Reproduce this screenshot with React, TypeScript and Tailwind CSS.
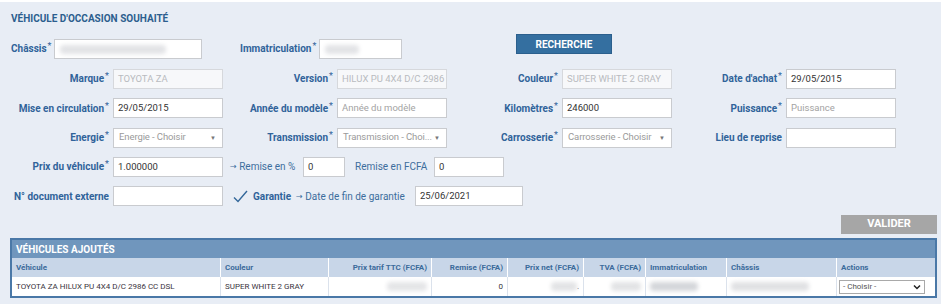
import React from 'react';

const Req = () => <span className="text-[9px] font-normal ml-[1px] relative top-[-3px]">*</span>;

const Arrow = () => <span className="font-['DejaVu_Sans',sans-serif] text-[8px] relative top-[-1px]">→</span>;

const Blur = ({ w, className = '' }: { w: string; className?: string }) => (
  <div className={`h-[9px] ${w} bg-[#d4d6da] rounded-sm blur-[2px] ${className}`} />
);

type Field = { label: string; req?: boolean; value?: string; placeholder?: string; kind?: 'input' | 'disabled' | 'select' };

const Input = ({ f, w }: { f: Field; w: string }) => {
  if (f.kind === 'select') {
    return (
      <div className={`${w} h-[20px] border border-[#c9cbcf] bg-white flex items-center justify-between pl-[5px] pr-[6px] text-[9.5px] text-[#9a9a9a]`}>
        <span className="whitespace-nowrap tracking-[-0.1px]">{f.placeholder}</span>
        <span className="text-[6px] text-[#777] ml-[2px]">▼</span>
      </div>
    );
  }
  const disabled = f.kind === 'disabled';
  return (
    <div
      className={`${w} h-[20px] border ${disabled ? 'border-[#d6d8dc] bg-[#f7f8fa] text-[#b9bbbf]' : 'border-[#c9cbcf] bg-white text-[#333]'} flex items-center px-[4px] text-[9.5px] overflow-hidden whitespace-nowrap`}
    >
      {f.value ? f.value : <span className="text-[#a3a3a3]">{f.placeholder}</span>}
    </div>
  );
};

const labelW = ['w-[102px]', 'w-[114px]', 'w-[115px]', 'w-[114px]'];

const rows: Field[][] = [
  [
    { label: 'Marque', req: true, value: 'TOYOTA ZA', kind: 'disabled' },
    { label: 'Version', req: true, value: 'HILUX PU 4X4 D/C 2986', kind: 'disabled' },
    { label: 'Couleur', req: true, value: 'SUPER WHITE 2 GRAY', kind: 'disabled' },
    { label: "Date d'achat", req: true, value: '29/05/2015' },
  ],
  [
    { label: 'Mise en circulation', req: true, value: '29/05/2015' },
    { label: 'Année du modèle', req: true, placeholder: 'Année du modèle' },
    { label: 'Kilomètres', req: true, value: '246000' },
    { label: 'Puissance', req: true, placeholder: 'Puissance' },
  ],
  [
    { label: 'Energie', req: true, placeholder: 'Energie - Choisir', kind: 'select' },
    { label: 'Transmission', req: true, placeholder: 'Transmission - Choi...', kind: 'select' },
    { label: 'Carrosserie', req: true, placeholder: 'Carrosserie - Choisir', kind: 'select' },
    { label: 'Lieu de reprise' },
  ],
];

const cols = [
  { name: 'Véhicule', w: 'w-[209px]', right: false },
  { name: 'Couleur', w: 'w-[108px]', right: false },
  { name: 'Prix tarif TTC (FCFA)', w: 'w-[103px]', right: true },
  { name: 'Remise (FCFA)', w: 'w-[76px]', right: true },
  { name: 'Prix net (FCFA)', w: 'w-[76px]', right: true },
  { name: 'TVA (FCFA)', w: 'w-[62px]', right: true },
  { name: 'Immatriculation', w: 'w-[81px]', right: false },
  { name: 'Châssis', w: 'w-[110px]', right: false },
  { name: 'Actions', w: 'flex-1', right: false },
];

export default function App() {
  return (
    <div className="w-[944px] h-[306px] bg-white font-['Roboto',sans-serif] overflow-hidden">
      <div className="w-[941px] h-[302px] mt-[2px] bg-[#e8edf5] pt-[10px]">
        <h1 className="pl-[11px] text-[10px] leading-[13px] font-bold text-[#2c5e8e] uppercase">
          Véhicule d'occasion souhaité
        </h1>

        {/* ligne châssis / immatriculation */}
        <div className="flex items-start pl-[11px] mt-[9px] text-[10px] font-bold text-[#30639a]">
          <span className="w-[43px] mt-[5px] h-[20px] leading-[20px] whitespace-nowrap">
            Châssis<Req />
          </span>
          <div className="w-[148px] h-[20px] mt-[5px] border border-[#c9cbcf] bg-white flex items-center px-[5px]">
            <Blur w="w-[106px]" className="bg-[#e2e3e6]" />
          </div>
          <span className="ml-[38px] w-[79px] mt-[5px] h-[20px] leading-[20px] whitespace-nowrap">
            Immatriculation<Req />
          </span>
          <div className="w-[83px] h-[20px] mt-[5px] border border-[#c9cbcf] bg-white flex items-center px-[5px]">
            <Blur w="w-[34px]" className="bg-[#e2e3e6]" />
          </div>
          <button className="ml-[114px] w-[96px] h-[20px] bg-[#346fa0] border border-[#2b5f8d] text-white text-[10px] font-bold">
            RECHERCHE
          </button>
        </div>

        <div className="flex flex-col gap-[9.3px] mt-[10px]">
          {rows.map((row, i) => (
            <div key={i} className="flex items-center pl-[11px]">
              {row.map((f, j) => (
                <React.Fragment key={j}>
                  <span className={`${labelW[j]} pr-[4px] text-right text-[10px] font-bold text-[#30639a] whitespace-nowrap`}>
                    {f.label}
                    {f.req && <Req />}
                  </span>
                  <Input f={f} w="w-[110px]" />
                </React.Fragment>
              ))}
            </div>
          ))}

          <div className="flex items-center pl-[11px] text-[10px]">
            <span className="w-[102px] pr-[4px] text-right font-bold text-[#30639a] whitespace-nowrap">
              Prix du véhicule<Req />
            </span>
            <Input f={{ label: '', value: '1.000000' }} w="w-[110px]" />
            <span className="ml-[7px] w-[73px] text-[#3d6d9d] whitespace-nowrap">
              <Arrow /> Remise en %
            </span>
            <Input f={{ label: '', value: '0' }} w="w-[42px]" />
            <span className="ml-[10px] w-[79px] text-[#3d6d9d] whitespace-nowrap">Remise en FCFA</span>
            <Input f={{ label: '', value: '0' }} w="w-[70px]" />
          </div>

          <div className="flex items-center pl-[11px] text-[10px]">
            <span className="w-[102px] pr-[4px] text-right font-bold text-[#30639a] whitespace-nowrap">
              N° document externe
            </span>
            <Input f={{ label: '' }} w="w-[110px]" />
            <svg className="ml-[10px] w-[15px] h-[13px]" viewBox="0 0 15 13" fill="none">
              <path d="M1 7.5 L5 11.5 L14 1" stroke="#33679a" strokeWidth="1.4" />
            </svg>
            <span className="ml-[5px] w-[43px] font-bold text-[#30639a]">Garantie</span>
            <span className="w-[119px] text-[#3d6d9d] whitespace-nowrap">
              <Arrow /> Date de fin de garantie
            </span>
            <Input f={{ label: '', value: '25/06/2021' }} w="w-[108px]" />
          </div>
        </div>

        <div className="flex justify-end pr-[4px] mt-[9px]">
          <button className="w-[96px] h-[19px] bg-[#a6a6a6] text-white text-[11px] font-bold">VALIDER</button>
        </div>

        <div className="ml-[10px] mt-[4px] w-[927px] border-2 border-[#4a78a7] bg-white">
          <div className="h-[18px] bg-[#7096bd] flex items-center px-[4px] text-[10px] font-bold text-white">
            VÉHICULES AJOUTÉS
          </div>
          <div className="flex h-[19px] bg-[#c8d6e8] text-[8px] font-bold text-[#3c6b9b]">
            {cols.map((c) => (
              <div
                key={c.name}
                className={`${c.w} flex items-center px-[4px] border-r border-white last:border-r-0 whitespace-nowrap ${c.right ? 'justify-end' : ''}`}
              >
                {c.name}
              </div>
            ))}
          </div>
          <div className="flex h-[19px] text-[8px] text-[#3a3340]">
            <div className="w-[209px] flex items-center px-[4px] border-r border-[#dbe2ec]">TOYOTA ZA HILUX PU 4X4 D/C 2986 CC DSL</div>
            <div className="w-[108px] flex items-center px-[4px] border-r border-[#dbe2ec]">SUPER WHITE 2 GRAY</div>
            <div className="w-[103px] flex items-center justify-end px-[4px] border-r border-[#dbe2ec]">
              <Blur w="w-[40px]" className="bg-[#e4e5e7]" />
            </div>
            <div className="w-[76px] flex items-center justify-end px-[4px] border-r border-[#dbe2ec]">0</div>
            <div className="w-[76px] flex items-center justify-end px-[4px] border-r border-[#dbe2ec]">
              <Blur w="w-[26px]" className="bg-[#e2e3e5]" />
              <span>.</span>
            </div>
            <div className="w-[62px] flex items-center justify-end px-[4px] border-r border-[#dbe2ec]">
              <Blur w="w-[30px]" className="bg-[#e2e3e5]" />
            </div>
            <div className="w-[81px] flex items-center px-[4px] border-r border-[#dbe2ec]">
              <Blur w="w-[48px]" className="bg-[#c7c8cc]" />
            </div>
            <div className="w-[110px] flex items-center px-[4px] border-r border-[#dbe2ec]">
              <Blur w="w-[78px]" className="bg-[#e0e1e3]" />
            </div>
            <div className="flex-1 flex items-center px-[2px]">
              <div className="w-[86px] h-[14px] border border-[#a9a9a9] bg-white flex items-center justify-between px-[3px] text-[8px] text-[#555]">
                <span>- Choisir -</span>
                <svg className="w-[8px] h-[6px]" viewBox="0 0 8 6" fill="none">
                  <path d="M1 1.5 L4 4.5 L7 1.5" stroke="#222" strokeWidth="1.5" />
                </svg>
              </div>
            </div>
          </div>
        </div>
      </div>
    </div>
  );
}
